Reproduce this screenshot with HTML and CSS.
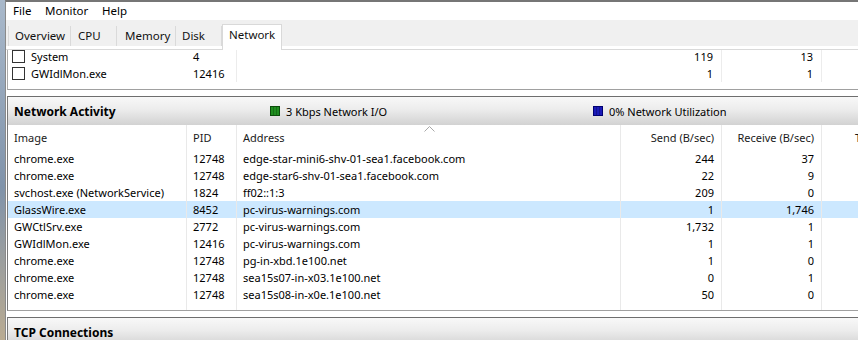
FILE: index.html
```html
<!DOCTYPE html>
<html>
<head>
<meta charset="utf-8">
<link rel="stylesheet" href="styles.css">
</head>
<body>
<div class="desk"></div>
<div class="win">
  <div class="menubar">
    <span class="menu m-file">File</span>
    <span class="menu m-mon">Monitor</span>
    <span class="menu">Help</span>
  </div>
  <div class="tabstrip">
    <div class="tab t-over">Overview</div>
    <div class="tab t-cpu">CPU</div>
    <div class="tab t-mem">Memory</div>
    <div class="tab t-disk">Disk</div>
    <div class="tab t-net active">Network</div>
  </div>
  <div class="tabline"></div>
  <div class="content">
    <div class="panel top">
      <div class="toplist">
        <div class="trow">
          <div class="c img"><span class="chk"></span>System</div>
          <div class="c pid">4</div>
          <div class="c num">119</div>
          <div class="c num">13</div>
          <div class="c num"></div>
        </div>
        <div class="trow">
          <div class="c img"><span class="chk"></span>GWIdlMon.exe</div>
          <div class="c pid">12416</div>
          <div class="c num">1</div>
          <div class="c num">1</div>
          <div class="c num"></div>
        </div>
      </div>
    </div>

    <div class="panel sect">
      <div class="shead">
        <div class="stitle">Network Activity</div>
        <div class="legend"><span class="sq green"></span>3 Kbps Network I/O</div>
        <div class="legend"><span class="sq blue"></span>0% Network Utilization</div>
      </div>
      <div class="grid">
        <div class="row head">
          <div class="c">Image</div>
          <div class="c">PID</div>
          <div class="c addr">Address<svg class="sort" width="11" height="6" viewBox="0 0 11 6"><polyline points="0.5,5.5 5.5,0.5 10.5,5.5" fill="none" stroke="#a8a8a8" stroke-width="1"/></svg></div>
          <div class="c num">Send (B/sec)</div>
          <div class="c num">Receive (B/sec)</div>
          <div class="c tot">T</div>
        </div>
        <div class="row"><div class="c">chrome.exe</div><div class="c">12748</div><div class="c">edge-star-mini6-shv-01-sea1.facebook.com</div><div class="c num">244</div><div class="c num">37</div><div class="c"></div></div>
        <div class="row"><div class="c">chrome.exe</div><div class="c">12748</div><div class="c">edge-star6-shv-01-sea1.facebook.com</div><div class="c num">22</div><div class="c num">9</div><div class="c"></div></div>
        <div class="row"><div class="c">svchost.exe (NetworkService)</div><div class="c">1824</div><div class="c">ff02::1:3</div><div class="c num">209</div><div class="c num">0</div><div class="c"></div></div>
        <div class="row sel"><div class="c">GlassWire.exe</div><div class="c">8452</div><div class="c">pc-virus-warnings.com</div><div class="c num">1</div><div class="c num">1,746</div><div class="c"></div></div>
        <div class="row"><div class="c">GWCtlSrv.exe</div><div class="c">2772</div><div class="c">pc-virus-warnings.com</div><div class="c num">1,732</div><div class="c num">1</div><div class="c"></div></div>
        <div class="row"><div class="c">GWIdlMon.exe</div><div class="c">12416</div><div class="c">pc-virus-warnings.com</div><div class="c num">1</div><div class="c num">1</div><div class="c"></div></div>
        <div class="row"><div class="c">chrome.exe</div><div class="c">12748</div><div class="c">pg-in-xbd.1e100.net</div><div class="c num">1</div><div class="c num">0</div><div class="c"></div></div>
        <div class="row"><div class="c">chrome.exe</div><div class="c">12748</div><div class="c">sea15s07-in-x03.1e100.net</div><div class="c num">0</div><div class="c num">1</div><div class="c"></div></div>
        <div class="row"><div class="c">chrome.exe</div><div class="c">12748</div><div class="c">sea15s08-in-x0e.1e100.net</div><div class="c num">50</div><div class="c num">0</div><div class="c"></div></div>
        <div class="row filler"><div class="c"></div><div class="c"></div><div class="c"></div><div class="c"></div><div class="c"></div><div class="c"></div></div>
      </div>
    </div>

    <div class="panel sect">
      <div class="shead">
        <div class="stitle">TCP Connections</div>
      </div>
    </div>
  </div>
</div>
</body>
</html>
```

FILE: styles.css
```css
* { box-sizing: border-box; margin: 0; padding: 0; }
html, body { width: 858px; height: 340px; overflow: hidden; }
body {
  display: flex;
  background: #8fa1b6;
  font-family: "Noto Sans", "DejaVu Sans", sans-serif;
  font-size: 11px;
  color: #000;
}
.desk {
  width: 5px;
  flex: none;
  background: linear-gradient(#a9b9cb, #8093aa 55%, #b9ab92);
}
.win {
  flex: 1;
  min-width: 0;
  overflow: hidden;
  background: #fff;
  border-top: 2px solid #767676;
  border-left: 1px solid #8a8a8a;
}
.menubar {
  height: 18px;
  display: flex;
  align-items: center;
  padding-left: 7px;
  font-size: 11.5px;
}
.menu { line-height: 18px; }
.m-file { width: 32px; }
.m-mon { width: 57px; }

.tabstrip {
  height: 26px;
  background: #f0f0f0;
  display: flex;
  align-items: flex-end;
  padding-left: 2px;
  font-size: 11.5px;
}
.tab {
  flex: none;
  height: 20px;
  line-height: 20px;
  padding-left: 7px;
  white-space: nowrap;
  border-left: 1px solid #dadada;
  color: #111;
}
.t-over { width: 62px; padding-left: 6px; }
.t-cpu { width: 46px; }
.t-mem { width: 59px; padding-left: 8px; }
.t-disk { width: 47px; padding-left: 6px; border-right: 1px solid #dadada; }
.tab.active {
  position: relative;
  z-index: 1;
  width: 60px;
  height: 26px;
  margin-bottom: -4px;
  background: #fff;
  border: 1px solid #d9d9d9;
  border-bottom: none;
  line-height: 19px;
  padding-left: 6px;
}
.tabline {
  height: 4px;
  border-bottom: 1px solid #d9d9d9;
}

.content { padding-left: 1px; }
.panel {
  border-left: 1px solid #a9a9a9;
}
.c { white-space: nowrap; overflow: hidden; }

.top {
  height: 40px;
  overflow: hidden;
  border-bottom: 1px solid #a0a0a0;
}
.toplist { margin-top: -2px; }
.trow {
  display: grid;
  grid-template-columns: 179px 50px 485px 100px 100px;
  height: 17px;
  line-height: 17px;
}
.trow .c { border-right: 1px solid #ececec; }
.trow .img {
  display: flex;
  align-items: center;
  padding-left: 4px;
  border-right: none;
}
.trow .pid { padding-left: 6px; }
.chk {
  width: 13px;
  height: 13px;
  border: 1px solid #333;
  background: #fff;
  margin-right: 6px;
  flex: none;
}
.trow .num { text-align: right; padding-right: 8px; }

.sect {
  margin-top: 6px;
  border-top: 1px solid #6e6e6e;
  border-left-color: #7a7a7a;
  border-bottom: 1px solid #a0a0a0;
}
.shead {
  height: 28px;
  display: flex;
  align-items: center;
  padding-left: 6px;
  background: linear-gradient(#f8f8f8, #ececec 45%, #d2d2d2);
}
.stitle {
  flex: none;
  width: 256px;
  font-weight: bold;
  font-size: 12px;
}
.legend {
  flex: none;
  display: flex;
  align-items: center;
  width: 323px;
}
.sq {
  width: 10px;
  height: 10px;
  margin-right: 6px;
  flex: none;
}
.green {
  background: repeating-linear-gradient(90deg, #1f8f1f 0 2px, #177017 2px 3px);
  border: 1px solid #0b4d0b;
}
.blue {
  background: repeating-linear-gradient(90deg, #1a1ab8 0 2px, #12128f 2px 3px);
  border: 1px solid #000070;
}

.row {
  display: grid;
  grid-template-columns: 179px 50px 384px 101px 100px 101px;
  height: 17px;
  line-height: 17px;
}
.row .c {
  border-right: 1px solid #e9e9e9;
  padding-left: 6px;
}
.row .num { text-align: right; padding-left: 0; padding-right: 7px; }
.row .tot { padding-left: 33px; }
.row.head {
  height: 25px;
  line-height: 25px;
  color: #1a1a1a;
}
.addr { position: relative; }
.sort {
  position: absolute;
  left: 187px;
  top: 1px;
}
.row.sel { background: #cce8ff; }
.row.filler { height: 7px; }
```
